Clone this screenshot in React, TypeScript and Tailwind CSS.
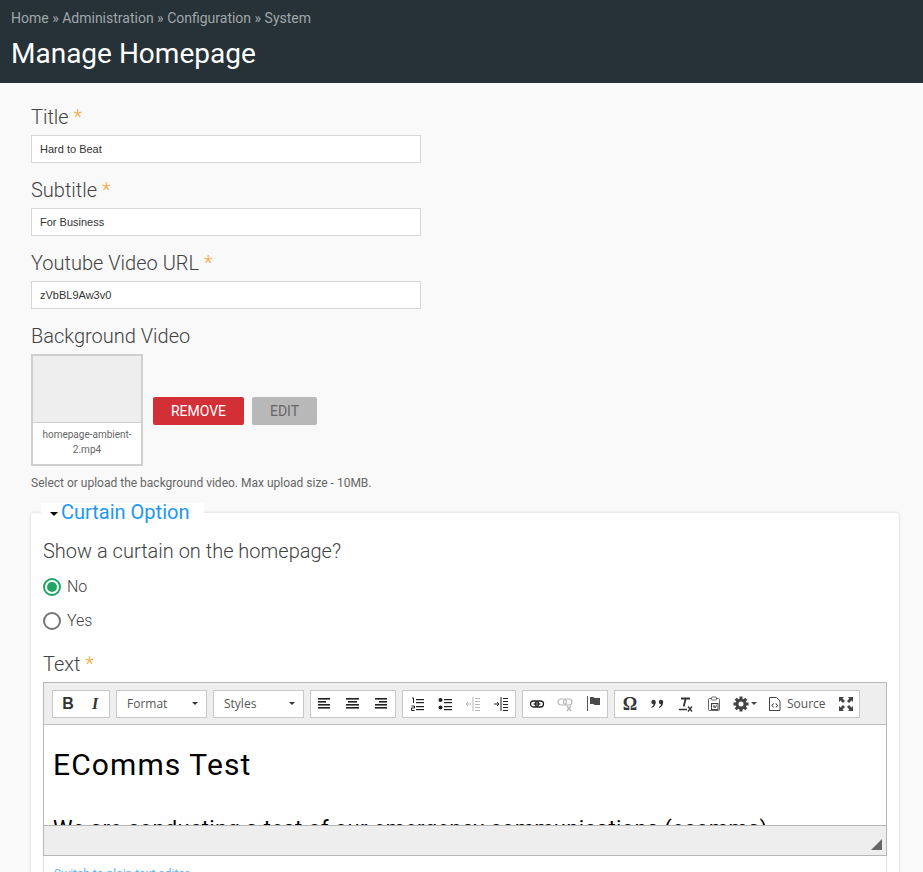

import React from "react";

const Star = () => <span className="text-[#f9a63c]"> *</span>;

function Field({ label, value }: { label: string; value: string }) {
  return (
    <div className="mb-[14px]">
      <div className="text-[20px] leading-[24px] font-light text-[#424242] h-[31px] pt-[1px]">{label}<Star /></div>
      <div className="h-[28px] w-[390px] border border-[#d6d6d6] bg-white pl-[8px] text-[11px] leading-[26px] text-[#333] [font-family:'Liberation_Sans',sans-serif]">{value}</div>
    </div>
  );
}

const Group = ({ children, className = "" }: { children?: React.ReactNode; className?: string }) => (
  <div className={"h-[28px] border border-[#c8c8c8] bg-white flex items-center " + className}>{children}</div>
);

const Ico = ({ children, x = 28 }: { children: React.ReactNode; x?: number }) => (
  <span className="flex shrink-0 items-center justify-center h-[26px]" style={{ width: x }}>
    <svg width="16" height="16" viewBox="0 0 16 16" fill="none">{children}</svg>
  </span>
);

const Lines = ({ rows, h = 1.6 }: { rows: [number, number, number][]; h?: number }) => (
  <>{rows.map(([x, y, w], i) => <rect key={i} x={x} y={y} width={w} height={h} fill="#222" />)}</>
);

const Select = ({ label, w }: { label: string; w: string }) => (
  <Group className={w + " pl-[10px] pr-[8px] justify-between text-[12px] text-[#555] [font-family:'Open_Sans',sans-serif]"}>
    <span>{label}</span>
    <span className="border-x-[3px] border-x-transparent border-t-[3px] border-t-[#333]" />
  </Group>
);

function Toolbar() {
  return (
    <div className="h-[42px] bg-[#eeeeee] border-b border-[#bcbcbc] flex items-center pl-[8px] gap-[6px]">
      <Group className="w-[58px] pl-[1px]">
        <span className="w-[28px] text-center text-[16px] font-bold text-[#333] [font-family:'Liberation_Sans',sans-serif]">B</span>
        <span className="w-[26px] text-center text-[16px] font-bold italic text-[#333] [font-family:'Liberation_Serif',serif]">I</span>
      </Group>
      <Select label="Format" w="w-[91px]" />
      <Select label="Styles" w="w-[91px]" />
      <Group className="w-[86px]">
        <Ico><Lines rows={[[1,2,12],[1,5,8],[1,8,12],[1,11,12]]} /></Ico>
        <Ico><Lines rows={[[1,2,13],[3,5,9],[1,8,13],[1,11,13]]} /></Ico>
        <Ico><Lines rows={[[2,2,12],[6,5,8],[2,8,12],[2,11,12]]} /></Ico>
      </Group>
      <Group className="w-[114px]">
        <Ico>
          <Lines h={1.2} rows={[[7,3,8],[7,6,8],[7,10,8],[7,13,8]]} />
          <path d="M3 2h1.500v5M2.500 10h3v2h-3v2.500h3" stroke="#222" strokeWidth="1" />
        </Ico>
        <Ico>
          <Lines h={1.2} rows={[[7,3,8],[7,6,8],[7,10,8],[7,13,8]]} />
          <circle cx="3.500" cy="4" r="2" fill="#222" /><circle cx="3.500" cy="11.500" r="2" fill="#222" />
        </Ico>
        <Ico>
          <g opacity="0.32">
            <path d="M1 8h5M3 6 1 8l2 2M8 1v14" stroke="#222" />
            <Lines h={1} rows={[[10,2,5],[10,5,5],[10,8,5],[10,11,5],[10,14,5]]} />
          </g>
        </Ico>
        <Ico>
          <path d="M1 8h5M4 6l2 2-2 2M8 1v14" stroke="#222" />
          <Lines h={1} rows={[[10,2,5],[10,5,5],[10,8,5],[10,11,5],[10,14,5]]} />
        </Ico>
      </Group>
      <Group className="w-[86px]">
        <Ico>
          <rect x="1.500" y="5" width="8" height="6" rx="3" stroke="#222" strokeWidth="1.300" />
          <rect x="6.500" y="5" width="8" height="6" rx="3" stroke="#222" strokeWidth="1.300" />
          <path d="M4.500 8h7" stroke="#222" strokeWidth="1.300" />
        </Ico>
        <Ico>
          <g opacity="0.32">
            <rect x="1" y="3" width="8.500" height="6" rx="3" stroke="#222" strokeWidth="1.200" />
            <rect x="6.500" y="3" width="8.500" height="6" rx="3" stroke="#222" strokeWidth="1.200" />
            <path d="m10 10 4 5m0-5-4 5" stroke="#222" strokeWidth="1.300" />
          </g>
        </Ico>
        <Ico>
          <path d="M2.500 0v15" stroke="#555" />
          <path d="M5 1h3.500l1 1H15v7H9.500l-1-1H5z" fill="#4a4a4a" />
        </Ico>
      </Group>
      <Group className="w-[246px]">
        <span className="w-[30px] shrink-0 text-center text-[18px] leading-none font-bold text-[#333] [font-family:'Liberation_Serif',serif]">Ω</span>
        <span className="w-[24px] shrink-0 text-center">
          <svg className="inline" width="16" height="16" viewBox="0 0 16 16"><circle cx="4.500" cy="6" r="2.200" fill="#333" /><path d="M6.700 6c0 3-1.500 5-4 6l-.5-.8c1.500-.8 2.200-2 2.300-3.200z" fill="#333" /><circle cx="12" cy="6" r="2.200" fill="#333" /><path d="M14.200 6c0 3-1.500 5-4 6l-.5-.8c1.500-.8 2.200-2 2.300-3.200z" fill="#333" /></svg>
        </span>
        <Ico x={32}>
          <path d="M4 2.500h9M8.700 2.500 6.700 10.500" stroke="#333" strokeWidth="1.800" />
          <path d="M2 13.500h8" stroke="#333" strokeWidth="1.500" />
          <path d="m11 10.500 4 5m0-5-4 5" stroke="#333" strokeWidth="1.300" />
        </Ico>
        <Ico x={26}>
          <path d="M5 2.500H3.500a1 1 0 0 0-1 1v10a1 1 0 0 0 1 1h9a1 1 0 0 0 1-1v-10a1 1 0 0 0-1-1H11" stroke="#666" />
          <rect x="5.500" y="1" width="5" height="3" rx="1" stroke="#666" />
          <rect x="5.500" y="7.500" width="6.500" height="6" stroke="#444" />
          <path d="m7 8.500 1 3.500 .8-2.500.8 2.500 1-3.500" stroke="#444" strokeWidth=".7" />
        </Ico>
        <span className="flex shrink-0 items-center w-[41px] pl-[6px]">
          <svg width="16" height="16" viewBox="0 0 16 16">
            <path d="M8 .5v3.500M8 12v3.500M.5 8H4M12 8h3.500M2.700 2.700l2.500 2.500M10.800 10.800l2.500 2.500M13.300 2.700l-2.500 2.500M5.200 10.800l-2.500 2.500" stroke="#444" strokeWidth="3" />
            <circle cx="8" cy="8" r="4" stroke="#444" strokeWidth="3" fill="white" />
          </svg>
          <span className="ml-[2px] border-x-[3px] border-x-transparent border-t-[3px] border-t-[#444]" />
        </span>
        <span className="flex shrink-0 items-center w-[65px]">
          <svg width="14" height="16" viewBox="0 0 14 16" fill="none">
            <path d="M1.500 1.500h7l3.500 3.500v9.500H1.500z" stroke="#444" />
            <path d="M5.500 7.500 4 9.500l1.500 2M8 7.500l1.500 2-1.500 2" stroke="#222" />
          </svg>
          <span className="ml-[5px] text-[12px] text-[#555] [font-family:'Open_Sans',sans-serif]">Source</span>
        </span>
        <span className="flex shrink-0 items-center justify-center w-[26px] h-[26px]">
          <svg width="14" height="14" viewBox="0 0 14 14" fill="none">
            <path d="M0 0h5L3.500 1.500 6 4 4 6 1.500 3.500 0 5zM14 0v5l-1.500-1.500L10 6 8 4l2.500-2.500L9 0zM0 14V9l1.500 1.500L4 8l2 2-2.500 2.500L5 14zM14 14H9l1.500-1.500L8 10l2-2 2.500 2.500L14 9z" fill="#444" />
          </svg>
        </span>
      </Group>
    </div>
  );
}

export default function App() {
  return (
    <div className="h-[872px] w-[923px] overflow-hidden bg-[#f9f9f9] [font-family:Roboto,sans-serif]">
      <header className="h-[83px] bg-[#263238] pl-[11px] pt-[9px]">
        <div className="text-[14px] leading-[18px] text-[#a0a6a9]">Home » Administration » Configuration » System</div>
        <h1 className="text-[28px] leading-[34px] mt-[10px] text-white font-normal">Manage Homepage</h1>
      </header>
      <main className="pl-[31px] pr-[24px] pt-[21px]">
        <Field label="Title" value="Hard to Beat" />
        <Field label="Subtitle" value="For Business" />
        <Field label="Youtube Video URL" value="zVbBL9Aw3v0" />
        <div className="text-[20px] leading-[24px] font-light text-[#424242] h-[31px] pt-[1px]">Background Video</div>
        <div className="flex items-center h-[112px]">
          <div className="w-[112px] h-[112px] border-2 border-[#cfcfcf] bg-white flex flex-col">
            <div className="h-[67px] bg-[#eeeeee] border-b border-[#cfcfcf]" />
            <div className="flex-1 text-center text-[10px] leading-[15px] pt-[4px] text-[#666]">homepage-ambient-<br />2.mp4</div>
          </div>
          <button className="ml-[10px] mt-[2px] w-[91px] h-[28px] rounded-[2px] bg-[#d32f37] text-white text-[14px]">REMOVE</button>
          <button className="ml-[8px] mt-[2px] w-[65px] h-[28px] rounded-[2px] bg-[#b8b8b8] text-[#666] text-[14px]">EDIT</button>
        </div>
        <p className="text-[12px] leading-[16px] mt-[9px] text-[#666]">Select or upload the background video. Max upload size - 10MB.</p>
        <section className="relative mt-[22px] bg-white rounded-[3px] shadow-[0_0_3px_rgba(0,0,0,0.18)] px-[12px] pt-[26px] h-[400px]">
          <div className="absolute left-[10px] top-[-10px] w-[163px] h-[22px] bg-white flex items-center pl-[9px] text-[20px] leading-[24px] text-[#2196f3]">
            <span className="mr-[3px] border-x-[4px] border-x-transparent border-t-[4px] border-t-black" />
            <span className="-mt-[5px]">Curtain Option</span>
          </div>
          <div className="text-[20px] leading-[24px] font-light text-[#424242]">Show a curtain on the homepage?</div>
          <div className="flex items-center h-[34px] mt-[7px] text-[16px] font-light text-[#424242]">
            <span className="w-[18px] h-[18px] rounded-full border-2 border-[#1fa463] flex items-center justify-center mr-[6px]">
              <span className="w-[10px] h-[10px] rounded-full bg-[#1fa463]" />
            </span>No
          </div>
          <div className="flex items-center h-[34px] text-[16px] font-light text-[#424242]">
            <span className="w-[18px] h-[18px] rounded-full border-2 border-[#757575] mr-[6px]" />Yes
          </div>
          <div className="text-[20px] leading-[24px] font-light text-[#424242] mt-[14px] h-[30px]">Text<Star /></div>
          <div className="border border-[#b6b6b6] w-[844px]">
            <Toolbar />
            <div className="h-[100px] overflow-hidden bg-white pl-[9px] pt-[20px] text-black">
              <div className="text-[30px] leading-[40px] tracking-[1.1px]">EComms Test</div>
              <div className="mt-[30px] text-[22px] leading-[28px] tracking-[0.3px] whitespace-nowrap">We are conducting a test of our emergency communications (ecomms)</div>
            </div>
            <div className="relative h-[30px] bg-[#eeeeee] border-t border-[#b6b6b6]">
              <svg className="absolute right-[4px] bottom-[5px]" width="11" height="11" viewBox="0 0 11 11"><path d="M11 0v11H0z" fill="#666" /></svg>
            </div>
          </div>
          <div className="border-x border-t-0 border-[#dedede] w-[844px] pl-[10px] pt-[9px] text-[12px] text-[#64b5f6]">Switch to plain text editor</div>
        </section>
      </main>
    </div>
  );
}
